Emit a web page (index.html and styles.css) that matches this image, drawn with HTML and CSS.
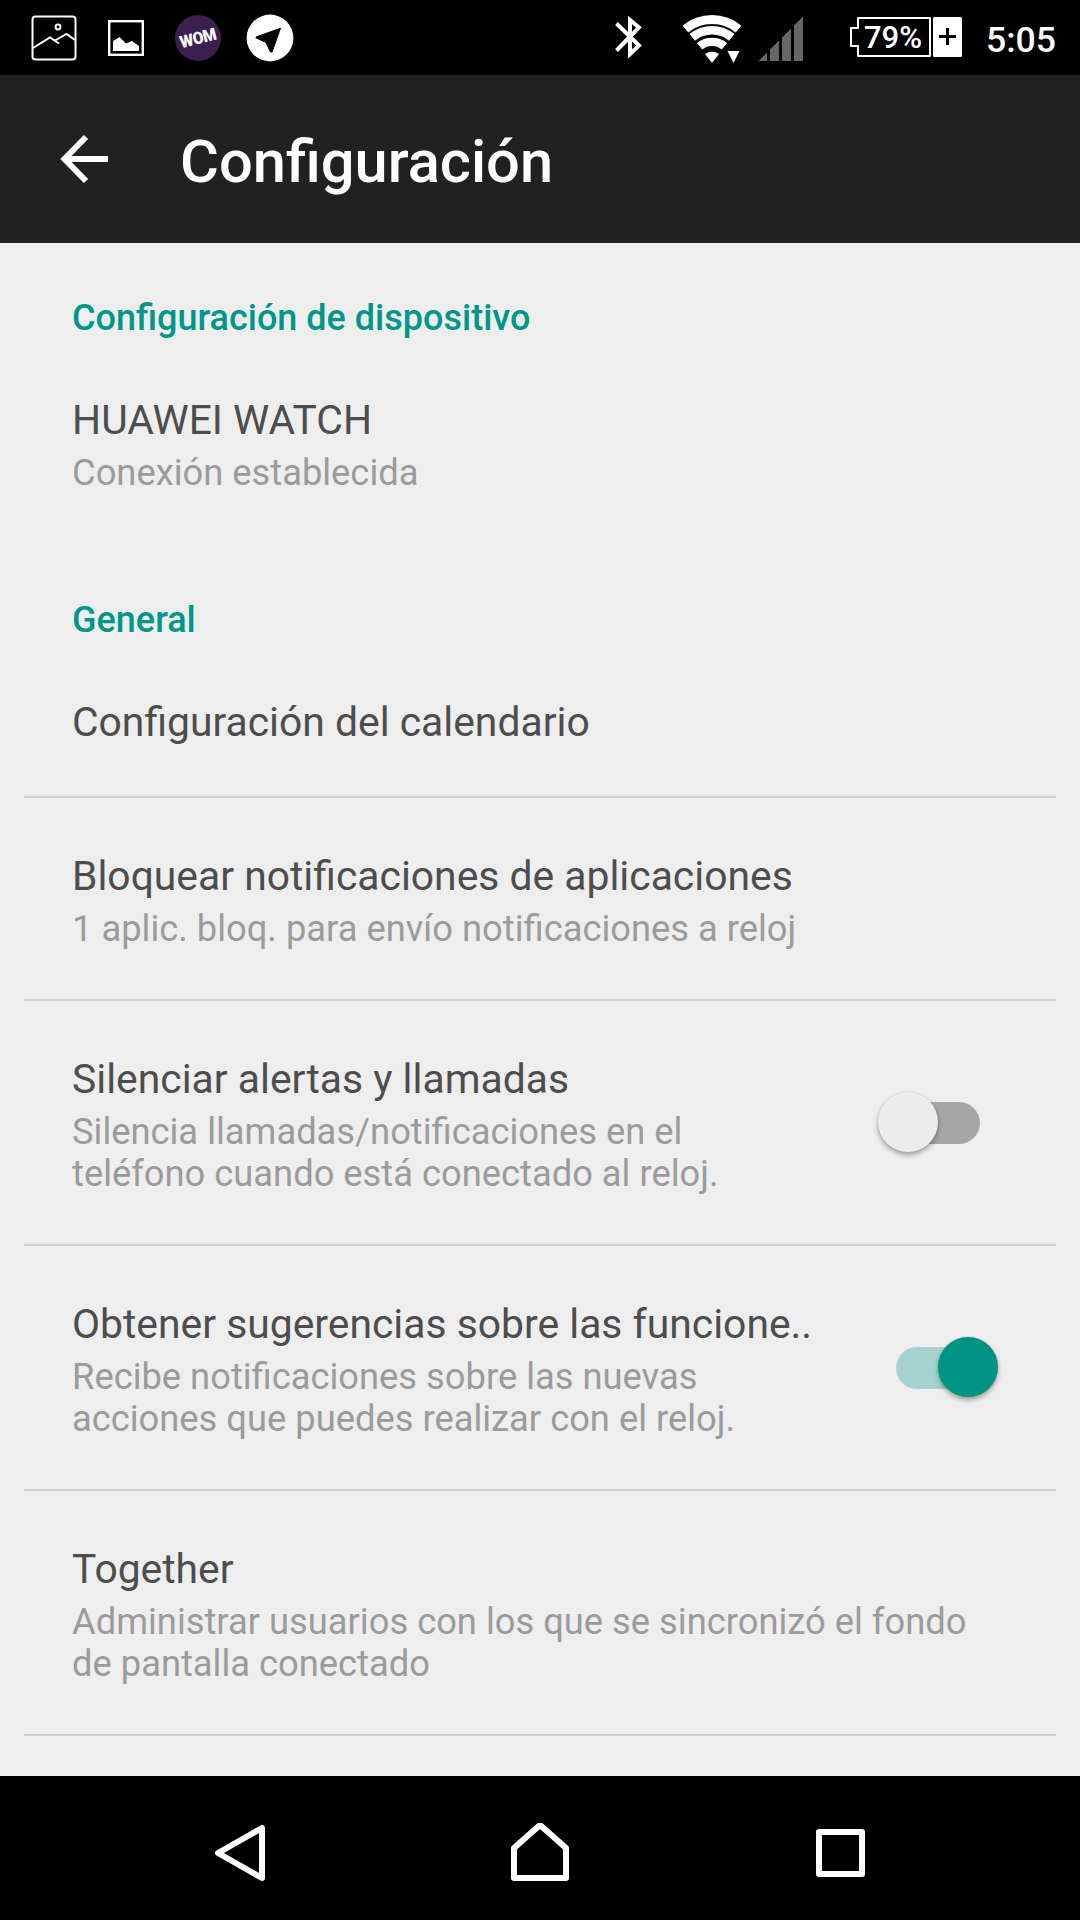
FILE: index.html
```
<!DOCTYPE html>
<html lang="es">
<head>
    <meta charset="UTF-8">
    <meta name="viewport" content="width=device-width, initial-scale=1.0">
    <title>Configuración</title>
    <link rel="stylesheet" href="styles.css">
</head>
<body>
    <div class="status-bar">
        <div class="notifications">
            <svg class="icon-gallery" width="46" height="46" viewBox="0 0 46 46" fill="none" stroke="#fff" stroke-width="2">
                <rect x="1.5" y="1.5" width="43" height="43" rx="3"/>
                <circle cx="27" cy="12" r="2.4"/>
                <path d="M2 33 L19 22.5 L28 28.5 M23 26 L35.5 19 L44 25"/>
            </svg>
            <svg class="icon-photo" width="36" height="36" viewBox="0 0 36 36">
                <rect x="1.2" y="1.2" width="33.6" height="33.6" fill="none" stroke="#fff" stroke-width="2.4"/>
                <path d="M5 31V21L11.5 17L18 23.5L24 21L31 26V31Z" fill="#fff"/>
            </svg>
            <div class="icon-wom"><span>WOM</span></div>
            <svg class="icon-telegram" width="48" height="48" viewBox="0 0 48 48">
                <circle cx="24" cy="24" r="23.4" fill="#fff"/>
                <path d="M10 23L34.5 14.2L26 38H24.5L20 28.5L10 23.8Z" fill="#000" stroke="#000" stroke-width="1" stroke-linejoin="round"/>
            </svg>
        </div>
        <div class="system">
            <svg class="icon-bluetooth" width="28" height="44" viewBox="0 0 28 44" fill="none" stroke="#fff" stroke-width="4">
                <path d="M1.5 8.5L24 30.5L15 39V5L24 12.5L1.5 35.5"/>
            </svg>
            <svg class="icon-wifi" width="60" height="50" viewBox="0 0 60 50">
                <g fill="none" stroke="#fff">
                    <path d="M3.5 14.1A41.7 41.7 0 0 1 56.5 14.1" stroke-width="9"/>
                    <path d="M10.2 22.4A31 31 0 0 1 49.8 22.4" stroke-width="8.6"/>
                    <path d="M17.6 31.3A19.5 19.5 0 0 1 42.4 31.3" stroke-width="8.4"/>
                </g>
                <path d="M23 39Q30 34.5 37 39L30 48Z" fill="#fff"/>
                <path d="M45.5 36H57.5L51.5 48Z" fill="#fff"/>
            </svg>
            <svg class="icon-signal" width="46" height="46" viewBox="0 0 46 46" fill="#666">
                <path d="M0.5 45L9 36.5V45ZM12 45V33.5L21 24.5V45ZM24 45V21.5L33 12.5V45ZM36 45V9.5L45 0.5V45Z"/>
            </svg>
            <div class="battery">
                <svg width="112" height="42" viewBox="0 0 112 42">
                    <path d="M8 1H80V39H8V29H1V11H8Z" fill="none" stroke="#fff" stroke-width="2" stroke-linejoin="round"/>
                    <rect x="83" y="0" width="29" height="40" rx="1.5" fill="#fff"/>
                    <path d="M89 19.5H106M97.5 11V28" stroke="#000" stroke-width="3"/>
                </svg>
                <span class="battery-level">79%</span>
            </div>
            <span class="clock">5:05</span>
        </div>
    </div>

    <header class="app-bar">
        <svg class="icon-back" width="50" height="56" viewBox="0 0 50 56" fill="none" stroke="#fff" stroke-width="6">
            <path d="M48 28H6M26 6L4.5 28L26 50"/>
        </svg>
        <h1>Configuración</h1>
    </header>

    <main class="settings">
        <h2>Configuración de dispositivo</h2>
        <div class="row row-device">
            <div class="row-text">
                <div class="row-title">HUAWEI WATCH</div>
                <div class="row-summary">Conexión establecida</div>
            </div>
        </div>

        <h2>General</h2>
        <div class="row">
            <div class="row-text">
                <div class="row-title">Configuración del calendario</div>
            </div>
        </div>
        <div class="row">
            <div class="row-text">
                <div class="row-title">Bloquear notificaciones de aplicaciones</div>
                <div class="row-summary">1 aplic. bloq. para envío notificaciones a reloj</div>
            </div>
        </div>
        <div class="row">
            <div class="row-text">
                <div class="row-title">Silenciar alertas y llamadas</div>
                <div class="row-summary">Silencia llamadas/notificaciones en el<br>teléfono cuando está conectado al reloj.</div>
            </div>
            <div class="switch"></div>
        </div>
        <div class="row">
            <div class="row-text">
                <div class="row-title">Obtener sugerencias sobre las funcione..</div>
                <div class="row-summary">Recibe notificaciones sobre las nuevas<br>acciones que puedes realizar con el reloj.</div>
            </div>
            <div class="switch on"></div>
        </div>
        <div class="row">
            <div class="row-text">
                <div class="row-title">Together</div>
                <div class="row-summary">Administrar usuarios con los que se sincronizó el fondo<br>de pantalla conectado</div>
            </div>
        </div>
    </main>

    <nav class="nav-bar">
        <svg width="60" height="60" viewBox="0 0 60 60">
            <path d="M8 30L52 5V55Z"/>
        </svg>
        <svg width="60" height="60" viewBox="0 0 60 60">
            <path d="M4 55V25L30 2L56 25V55Z"/>
        </svg>
        <svg width="60" height="60" viewBox="0 0 60 60">
            <rect x="9" y="9" width="43" height="42"/>
        </svg>
    </nav>
</body>
</html>
```
FILE: styles.css
```
* {
    margin: 0;
    padding: 0;
    box-sizing: border-box;
}
body {
    width: 1080px;
    height: 1920px;
    display: flex;
    flex-direction: column;
    overflow: hidden;
    background: #eee;
    font-family: Roboto, sans-serif;
}
svg {
    display: block;
    flex-shrink: 0;
}

/* status bar */
.status-bar {
    height: 75px;
    display: flex;
    justify-content: space-between;
    background: #000;
    color: #fff;
}
.notifications, .system {
    display: flex;
    align-items: flex-start;
}
.icon-gallery {
    margin: 15px 0 0 31px;
}
.icon-photo {
    margin: 20px 0 0 31px;
}
.icon-wom {
    width: 46px;
    height: 46px;
    margin: 15px 0 0 31px;
    border-radius: 50%;
    background: #3b1f4f;
    display: flex;
    align-items: center;
    justify-content: center;
}
.icon-wom span {
    font-size: 17px;
    font-weight: 900;
    letter-spacing: -0.5px;
    transform: rotate(-14deg) scaleX(0.92);
}
.icon-telegram {
    margin: 14px 0 0 25px;
}
.icon-bluetooth {
    margin: 15px 39px 0 0;
}
.icon-wifi {
    margin: 15px 16px 0 0;
}
.icon-signal {
    margin: 16px 46px 0 0;
}
.battery {
    position: relative;
    margin: 17px 25px 0 0;
}
.battery-level {
    position: absolute;
    left: 14px;
    top: 1px;
    font-size: 31px;
    font-weight: 500;
    line-height: 39px;
}
.clock {
    width: 70px;
    margin: 19px 23px 0 0;
    font-size: 35.6px;
    font-weight: 500;
    line-height: 42px;
    white-space: nowrap;
    text-indent: -1px;
}

/* app bar */
.app-bar {
    height: 168px;
    display: flex;
    align-items: center;
    background: #212121;
    color: #fff;
}
.icon-back {
    margin: 0 0 0 60px;
}
.app-bar h1 {
    margin-left: 70px;
    padding-top: 5px;
    font-size: 59.6px;
    font-weight: 500;
    line-height: 70px;
}

/* settings list */
.settings {
    flex: 1;
}
.settings h2 {
    padding: 54px 72px 3px;
    color: #009688;
    font-size: 36px;
    font-weight: 500;
    line-height: 42px;
}
.row {
    display: flex;
    align-items: center;
    margin: 0 24px;
    padding: 54px 48px 49px;
    border-bottom: 2px solid #d0d0d0;
}
.row-device {
    border-bottom-color: transparent;
}
.row-text {
    flex: 1;
    white-space: nowrap;
}
.row-title {
    color: #4d4d4d;
    font-size: 40.85px;
    line-height: 49px;
}
.row-summary {
    padding-top: 7px;
    color: #9b9b9b;
    font-size: 36.32px;
    line-height: 42px;
}
.switch {
    position: relative;
    width: 84px;
    height: 42px;
    margin: 0 28px 4px 0;
    border-radius: 21px;
    background: #a6a6a6;
}
.switch::after {
    content: "";
    position: absolute;
    left: -18px;
    top: -10px;
    width: 60px;
    height: 60px;
    border-radius: 50%;
    background: #ececec;
    box-shadow: 0 3px 5px rgba(0,0,0,0.32), 0 0 2px rgba(0,0,0,0.12);
}
.switch.on {
    background: #a6d3cf;
}
.switch.on::after {
    left: 42px;
    background: #009485;
}

/* navigation bar */
.nav-bar {
    height: 144px;
    display: flex;
    justify-content: space-between;
    padding: 47px 210px 0;
    background: #000;
}
.nav-bar svg {
    fill: none;
    stroke: #fff;
    stroke-width: 6;
    stroke-linejoin: round;
}
```
